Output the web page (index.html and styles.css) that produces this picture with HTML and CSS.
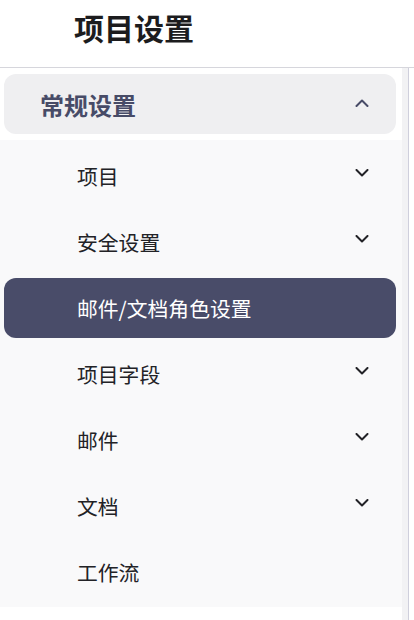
FILE: index.html
```html
<!DOCTYPE html>
<html lang="zh">
<head>
<meta charset="utf-8">
<link rel="stylesheet" href="styles.css">
</head>
<body>
<header class="top">
  <h1 class="title">项目设置</h1>
</header>
<div class="main">
  <nav class="sidebar">
    <div class="group-head">
      <span>常规设置</span>
      <svg class="chev up" viewBox="0 0 14 8" width="14" height="8"><path d="M1.5 7 L7 1.5 L12.5 7" fill="none" stroke="currentColor" stroke-width="2" stroke-linecap="round" stroke-linejoin="round"/></svg>
    </div>
    <ul class="items">
      <li class="item"><span>项目</span><svg class="chev" viewBox="0 0 14 8" width="14" height="8"><path d="M1.5 1 L7 6.5 L12.5 1" fill="none" stroke="currentColor" stroke-width="2" stroke-linecap="round" stroke-linejoin="round"/></svg></li>
      <li class="item"><span>安全设置</span><svg class="chev" viewBox="0 0 14 8" width="14" height="8"><path d="M1.5 1 L7 6.5 L12.5 1" fill="none" stroke="currentColor" stroke-width="2" stroke-linecap="round" stroke-linejoin="round"/></svg></li>
      <li class="item active"><span>邮件/文档角色设置</span></li>
      <li class="item"><span>项目字段</span><svg class="chev" viewBox="0 0 14 8" width="14" height="8"><path d="M1.5 1 L7 6.5 L12.5 1" fill="none" stroke="currentColor" stroke-width="2" stroke-linecap="round" stroke-linejoin="round"/></svg></li>
      <li class="item"><span>邮件</span><svg class="chev" viewBox="0 0 14 8" width="14" height="8"><path d="M1.5 1 L7 6.5 L12.5 1" fill="none" stroke="currentColor" stroke-width="2" stroke-linecap="round" stroke-linejoin="round"/></svg></li>
      <li class="item"><span>文档</span><svg class="chev" viewBox="0 0 14 8" width="14" height="8"><path d="M1.5 1 L7 6.5 L12.5 1" fill="none" stroke="currentColor" stroke-width="2" stroke-linecap="round" stroke-linejoin="round"/></svg></li>
      <li class="item"><span>工作流</span></li>
    </ul>
  </nav>
  <div class="rail"></div>
</div>
</body>
</html>
```
FILE: styles.css
```css
* { box-sizing: border-box; }
html, body {
  margin: 0;
  padding: 0;
  background: #ffffff;
  font-family: "Noto Sans CJK SC", "Noto Sans", sans-serif;
}
.top {
  height: 68px;
  border-bottom: 1px solid #d6d6dc;
  display: flex;
  align-items: center;
  padding-left: 74px;
  padding-bottom: 13px;
}
.title {
  margin: 0;
  font-size: 30px;
  font-weight: 700;
  color: #1c1c1e;
  line-height: 1;
}
.main {
  display: flex;
  align-items: stretch;
  min-height: 552px;
}
.sidebar {
  width: 402px;
  flex: none;
  padding-top: 6px;
  align-self: flex-start;
}
.group-head {
  margin: 0 6px 0 4px;
  height: 60px;
  background: #efeff1;
  border-radius: 12px;
  display: flex;
  align-items: center;
  justify-content: space-between;
  padding: 0 27px 0 36px;
  color: #474b67;
  font-size: 24px;
  font-weight: 700;
}
.chev { display: block; }
.chev.up { margin-top: -2px; }
.items {
  list-style: none;
  margin: 6px 0 0;
  padding: 6px 0 5px;
  background: #f9f9fa;
  display: flex;
  flex-direction: column;
  gap: 6px;
}
.item {
  height: 60px;
  margin: 0 6px 0 4px;
  border-radius: 12px;
  display: flex;
  align-items: center;
  justify-content: space-between;
  padding: 0 27px 0 73px;
  font-size: 20.8px;
  color: #222226;
}
.item .chev { margin-top: -7px; color: #222226; }
.item.active {
  background: #494c69;
  color: #ffffff;
}
.rail {
  width: 7px;
  flex: none;
  background: #f2f2f4;
  border-right: 1px solid #cfcfdc;
}
```
